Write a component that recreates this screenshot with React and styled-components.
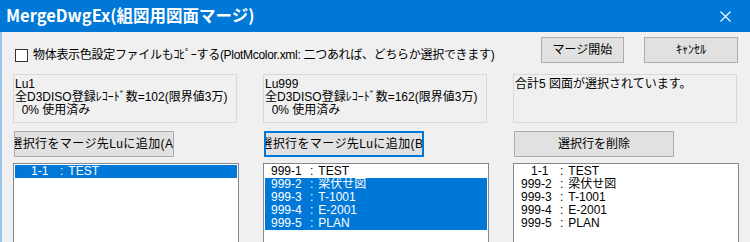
import React from 'react';
import styled, { createGlobalStyle } from 'styled-components';

const GlobalStyle = createGlobalStyle`
  html, body {
    margin: 0;
    padding: 0;
    background: #f0f0f0;
  }
`;

const UI_FONT = `"Liberation Sans", "Noto Sans CJK JP", sans-serif`;

const Window = styled.div`
  width: 750px;
  height: 242px;
  overflow: hidden;
  background: #f0f0f0;
  font-family: ${UI_FONT};
  font-size: 12px;
  color: #000;
`;

const TitleBar = styled.div`
  height: 32px;
  background: #0078d7;
  color: #fff;
  display: flex;
  align-items: center;
  justify-content: space-between;
  padding: 0 19px 0 6px;
`;

const Title = styled.div`
  font-family: "Noto Sans CJK JP", sans-serif;
  font-weight: 700;
  font-size: 16.5px;
  line-height: 20px;
  margin-top: -3px;
`;

const CloseIcon = () => (
  <svg width='11' height='11' viewBox='0 0 11 11'>
    <path d='M0.5 0.5 L10.5 10.5 M10.5 0.5 L0.5 10.5' stroke='#fff' strokeWidth='1.1' fill='none' />
  </svg>
);

const Body = styled.div`
  height: 210px;
  border-left: 2px solid #99c4ee;
  padding: 5px 12px 0 11px;
  box-sizing: border-box;
`;

const TopRow = styled.div`
  display: flex;
  align-items: flex-start;
  height: 26px;
`;

const CheckLabel = styled.label`
  flex: 1;
  display: flex;
  align-items: center;
  gap: 5px;
  margin-top: 11px;
  margin-left: 2px;
  line-height: 14px;
  white-space: nowrap;
  letter-spacing: -0.3px;
`;

const CheckBox = styled.span`
  width: 11px;
  height: 11px;
  border: 1px solid #333;
  background: #fff;
  flex-shrink: 0;
`;

const Button = styled.div`
  box-sizing: border-box;
  width: ${p => p.width}px;
  height: 26px;
  margin-left: ${p => p.gap || 0}px;
  background: #e1e1e1;
  border: ${p => p.focused ? '2px solid #0078d7' : '1px solid #adadad'};
  display: flex;
  align-items: center;
  justify-content: center;
  overflow: hidden;
  white-space: nowrap;
  line-height: 14px;
  span {
    flex-shrink: 0;
    letter-spacing: ${p => p.spread ? '0.4px' : '0'};
  }
`;

const Columns = styled.div`
  display: grid;
  grid-template-columns: 226px 226px 226px;
  column-gap: 24px;
  margin-top: 11px;
`;

const Column = styled.div`
  display: flex;
  flex-direction: column;
`;

const InfoBox = styled.div`
  box-sizing: border-box;
  width: 224px;
  height: 49px;
  border: 1px solid #d9d9d9;
  padding: 3px 1px 0;
  line-height: 13px;
  white-space: pre;
  overflow: hidden;
`;

const ButtonSlot = styled.div`
  margin: 8px 0 0 1px;
`;

const ListBox = styled.div`
  box-sizing: border-box;
  margin-top: 6px;
  width: 226px;
  height: 100px;
  background: #fff;
  border: 1px solid #828790;
  padding: 1px;
`;

const ListItem = styled.div`
  display: flex;
  height: 13px;
  line-height: 13px;
  background: ${p => p.selected ? '#0078d7' : 'transparent'};
  color: ${p => p.selected ? '#fff' : '#000'};
  white-space: nowrap;
`;

const ItemKey = styled.span`
  width: 45px;
  padding-left: ${p => p.indent}px;
  box-sizing: border-box;
`;

const ItemName = styled.span`
  padding-left: 5px;
`;

const rows = [
  { key: '1-1', name: 'TEST' },
  { key: '999-2', name: '梁伏せ図' },
  { key: '999-3', name: 'T-1001' },
  { key: '999-4', name: 'E-2001' },
  { key: '999-5', name: 'PLAN' },
];

const list2 = [
  { key: '999-1', name: 'TEST' },
  ...rows.slice(1),
];

const Row = ({ item, selected }) => (
  <ListItem selected={selected}>
    <ItemKey indent={item.key.length < 4 ? 16 : 6}>{item.key}</ItemKey>
    <span>:</span>
    <ItemName>{item.name}</ItemName>
  </ListItem>
);

export default function App() {
  return (
    <>
      <GlobalStyle />
      <Window>
        <TitleBar>
          <Title>MergeDwgEx(組図用図面マージ)</Title>
          <CloseIcon />
        </TitleBar>
        <Body>
          <TopRow>
            <CheckLabel>
              <CheckBox />
              物体表示色設定ファイルもｺﾋﾟｰする(PlotMcolor.xml: 二つあれば、どちらか選択できます)
            </CheckLabel>
            <Button width={83}><span>マージ開始</span></Button>
            <Button width={94} gap={20}><span>ｷｬﾝｾﾙ</span></Button>
          </TopRow>
          <Columns>
            <Column>
              <InfoBox>{'Lu1\n全D3DISO登録ﾚｺｰﾄﾞ数=102(限界値3万)\n  0% 使用済み'}</InfoBox>
              <ButtonSlot>
                <Button width={160} spread><span>選択行をマージ先Luに追加(A)</span></Button>
              </ButtonSlot>
              <ListBox>
                <Row item={rows[0]} selected />
              </ListBox>
            </Column>
            <Column>
              <InfoBox>{'Lu999\n全D3DISO登録ﾚｺｰﾄﾞ数=162(限界値3万)\n  0% 使用済み'}</InfoBox>
              <ButtonSlot>
                <Button width={160} focused spread><span>選択行をマージ先Luに追加(B)</span></Button>
              </ButtonSlot>
              <ListBox>
                {list2.map((it, i) => <Row key={it.key} item={it} selected={i > 0} />)}
              </ListBox>
            </Column>
            <Column>
              <InfoBox>合計5 図面が選択されています。</InfoBox>
              <ButtonSlot>
                <Button width={160}><span>選択行を削除</span></Button>
              </ButtonSlot>
              <ListBox>
                {rows.map(it => <Row key={it.key} item={it} />)}
              </ListBox>
            </Column>
          </Columns>
        </Body>
      </Window>
    </>
  );
}
